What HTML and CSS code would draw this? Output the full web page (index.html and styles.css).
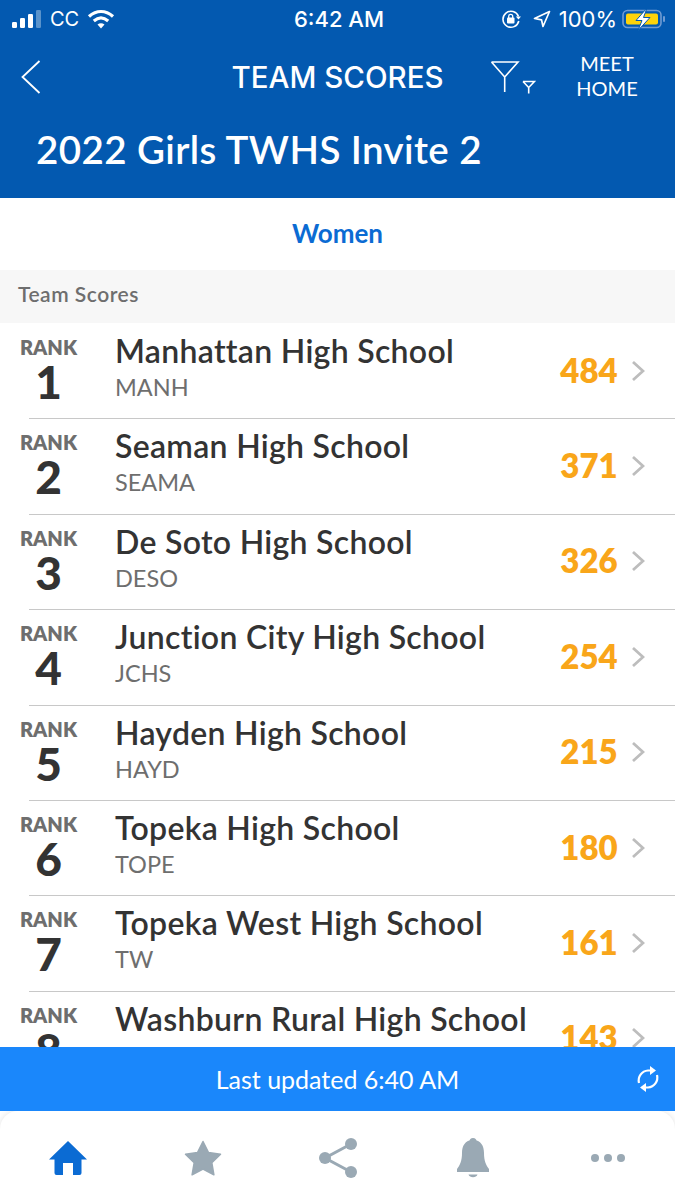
FILE: index.html
```html
<!DOCTYPE html>
<html>
<head>
    <title>Team Scores</title>
    <link rel="stylesheet" href="styles.css">
</head>
<body>
    <div class="screen">
        <div class="header">
            <div class="status-bar">
                <div class="status-left">
                    <svg class="signal" width="30" height="20" viewBox="0 0 30 20">
                        <rect x="0" y="13" width="5" height="6" rx="1.2" fill="#fff"/>
                        <rect x="8" y="9" width="5" height="10" rx="1.2" fill="#fff"/>
                        <rect x="16" y="5" width="5" height="14" rx="1.2" fill="#fff"/>
                        <rect x="24" y="1" width="5" height="18" rx="1.2" fill="#fff" opacity=".35"/>
                    </svg>
                    <span>CC</span>
                    <svg width="28" height="20" viewBox="0 0 28 20">
                        <path d="M2 7.5C9.500 .8 18.500 .8 26 7.500" fill="none" stroke="#fff" stroke-width="3.200"/>
                        <path d="M6.800 12C11.500 8 16.500 8 21.200 12" fill="none" stroke="#fff" stroke-width="3.200"/>
                        <path d="M10.500 15.500C12.800 13.700 15.200 13.700 17.500 15.500L14 19.500Z" fill="#fff"/>
                    </svg>
                </div>
                <div class="status-time">6:42 AM</div>
                <div class="status-right">
                    <svg class="rotation-lock" width="20" height="20" viewBox="0 0 20 20">
                        <path d="M17.500 7.500A8 8 0 1 0 17.800 12" fill="none" stroke="#fff" stroke-width="1.600"/>
                        <path d="M14.800 7.500H20L17.500 10.500Z" fill="#fff"/>
                        <rect x="6" y="8.500" width="7.500" height="6" rx="1" fill="#fff"/>
                        <path d="M7.700 9V7.300a2 2 0 0 1 4 0V9" fill="none" stroke="#fff" stroke-width="1.300"/>
                    </svg>
                    <svg width="18" height="18" viewBox="0 0 18 18">
                        <path d="M16.500 1.500L1.500 8.500L8.500 9.800L10 16.500Z" fill="none" stroke="#fff" stroke-width="1.700" stroke-linejoin="round"/>
                    </svg>
                    <span class="battery-pct">100%</span>
                    <svg class="battery" width="44" height="24" viewBox="0 0 44 24">
                        <rect x="1" y="3.500" width="38" height="17" rx="4.500" fill="none" stroke="#6f9bd3" stroke-width="1.600"/>
                        <rect x="4" y="6.500" width="32" height="11" rx="2" fill="#fed30a"/>
                        <rect x="41" y="9" width="2" height="6" rx="1" fill="#6f9bd3"/>
                        <path d="M25 1L14 13.500H20L16 23.500L28 10.500H21.500Z" fill="#fff" stroke="#0359b0" stroke-width="1"/>
                    </svg>
                </div>
            </div>
            <div class="nav-bar">
                <div class="nav-left">
                    <svg class="back" width="22" height="36" viewBox="0 0 22 36">
                        <path d="M19.500 2L2.500 18L19.500 34" fill="none" stroke="#fff" stroke-width="1.800"/>
                    </svg>
                </div>
                <div class="nav-title">TEAM SCORES</div>
                <div class="nav-right">
                    <svg class="filter" width="46" height="34" viewBox="0 0 46 34">
                        <path d="M1.500 2H28L14.700 17V32M14.700 17L1.500 2" fill="none" stroke="#fff" stroke-width="1.600"/>
                        <path d="M33 21.500H44.500L38.700 27.500V33.500M38.700 27.500L33 21.500" fill="none" stroke="#fff" stroke-width="1.600"/>
                    </svg>
                    <div class="meet-home">MEET<br>HOME</div>
                </div>
            </div>
            <div class="meet-name">2022 Girls TWHS Invite 2</div>
        </div>

        <div class="tab-title">Women</div>
        <div class="section-label">Team Scores</div>

        <div class="score-list">
            <div class="score-row">
                <div class="rank"><span class="rank-label">RANK</span><span class="rank-num">1</span></div>
                <div class="school"><div class="school-name">Manhattan High School</div><div class="school-code">MANH</div></div>
                <div class="points">484</div>
                <svg class="chevron" width="14" height="22" viewBox="0 0 14 22"><path d="M2 2L12 11L2 20" fill="none" stroke="#bdbdbd" stroke-width="2.800"/></svg>
            </div>
            <div class="score-row">
                <div class="rank"><span class="rank-label">RANK</span><span class="rank-num">2</span></div>
                <div class="school"><div class="school-name">Seaman High School</div><div class="school-code">SEAMA</div></div>
                <div class="points">371</div>
                <svg class="chevron" width="14" height="22" viewBox="0 0 14 22"><path d="M2 2L12 11L2 20" fill="none" stroke="#bdbdbd" stroke-width="2.800"/></svg>
            </div>
            <div class="score-row">
                <div class="rank"><span class="rank-label">RANK</span><span class="rank-num">3</span></div>
                <div class="school"><div class="school-name">De Soto High School</div><div class="school-code">DESO</div></div>
                <div class="points">326</div>
                <svg class="chevron" width="14" height="22" viewBox="0 0 14 22"><path d="M2 2L12 11L2 20" fill="none" stroke="#bdbdbd" stroke-width="2.800"/></svg>
            </div>
            <div class="score-row">
                <div class="rank"><span class="rank-label">RANK</span><span class="rank-num">4</span></div>
                <div class="school"><div class="school-name">Junction City High School</div><div class="school-code">JCHS</div></div>
                <div class="points">254</div>
                <svg class="chevron" width="14" height="22" viewBox="0 0 14 22"><path d="M2 2L12 11L2 20" fill="none" stroke="#bdbdbd" stroke-width="2.800"/></svg>
            </div>
            <div class="score-row">
                <div class="rank"><span class="rank-label">RANK</span><span class="rank-num">5</span></div>
                <div class="school"><div class="school-name">Hayden High School</div><div class="school-code">HAYD</div></div>
                <div class="points">215</div>
                <svg class="chevron" width="14" height="22" viewBox="0 0 14 22"><path d="M2 2L12 11L2 20" fill="none" stroke="#bdbdbd" stroke-width="2.800"/></svg>
            </div>
            <div class="score-row">
                <div class="rank"><span class="rank-label">RANK</span><span class="rank-num">6</span></div>
                <div class="school"><div class="school-name">Topeka High School</div><div class="school-code">TOPE</div></div>
                <div class="points">180</div>
                <svg class="chevron" width="14" height="22" viewBox="0 0 14 22"><path d="M2 2L12 11L2 20" fill="none" stroke="#bdbdbd" stroke-width="2.800"/></svg>
            </div>
            <div class="score-row">
                <div class="rank"><span class="rank-label">RANK</span><span class="rank-num">7</span></div>
                <div class="school"><div class="school-name">Topeka West High School</div><div class="school-code">TW</div></div>
                <div class="points">161</div>
                <svg class="chevron" width="14" height="22" viewBox="0 0 14 22"><path d="M2 2L12 11L2 20" fill="none" stroke="#bdbdbd" stroke-width="2.800"/></svg>
            </div>
            <div class="score-row">
                <div class="rank"><span class="rank-label">RANK</span><span class="rank-num">8</span></div>
                <div class="school"><div class="school-name">Washburn Rural High School</div><div class="school-code">WRHS</div></div>
                <div class="points">143</div>
                <svg class="chevron" width="14" height="22" viewBox="0 0 14 22"><path d="M2 2L12 11L2 20" fill="none" stroke="#bdbdbd" stroke-width="2.800"/></svg>
            </div>
        </div>

        <div class="update-bar">
            <span>Last updated 6:40 AM</span>
            <svg class="refresh" width="24" height="28" viewBox="0 0 24 28">
                <path d="M3 18A10 10 0 0 1 12 5.500H15" fill="none" stroke="#fff" stroke-width="2.200"/>
                <path d="M14 1L20 5.500L14 10Z" fill="#fff"/>
                <path d="M21 10A10 10 0 0 1 12 22.500H9" fill="none" stroke="#fff" stroke-width="2.200"/>
                <path d="M10 18L4 22.500L10 27Z" fill="#fff"/>
            </svg>
        </div>

        <div class="tab-bar">
            <svg width="40" height="36" viewBox="0 0 40 36">
                <path d="M20 1L39 19.500H33.500V33a2 2 0 0 1-2 2H25V23H15V35H8.500a2 2 0 0 1-2-2V19.500H1Z" fill="#0b6bd3"/>
            </svg>
            <svg width="38" height="36" viewBox="0 0 38 36">
                <path d="M19 1.500L24.500 12.500L36.500 14.200L27.800 22.700L29.900 34.800L19 29L8.100 34.800L10.200 22.700L1.500 14.200L13.500 12.500Z" fill="#9aa9b4" stroke="#9aa9b4" stroke-width="1.500" stroke-linejoin="round"/>
            </svg>
            <svg width="40" height="42" viewBox="0 0 40 42">
                <path d="M33 7L7 21L33 35" fill="none" stroke="#9aa9b4" stroke-width="3"/>
                <circle cx="33" cy="7" r="6" fill="#9aa9b4"/>
                <circle cx="7" cy="21" r="6" fill="#9aa9b4"/>
                <circle cx="33" cy="35" r="6" fill="#9aa9b4"/>
            </svg>
            <svg width="34" height="42" viewBox="0 0 34 42">
                <circle cx="17" cy="4.500" r="3.500" fill="#9aa9b4"/>
                <path d="M17 3C9 3 6 9 6 16C6 24 4 28 1 32V35H33V32C30 28 28 24 28 16C28 9 25 3 17 3Z" fill="#9aa9b4"/>
                <path d="M12.500 37.500H21.500C20.500 41 13.500 41 12.500 37.500Z" fill="#9aa9b4"/>
            </svg>
            <svg width="36" height="10" viewBox="0 0 36 10">
                <circle cx="5" cy="5" r="4" fill="#9aa9b4"/>
                <circle cx="18" cy="5" r="4" fill="#9aa9b4"/>
                <circle cx="31" cy="5" r="4" fill="#9aa9b4"/>
            </svg>
        </div>
    </div>
</body>
</html>
```

FILE: styles.css
```css
html, body {
    margin: 0;
    padding: 0;
}
body {
    font-family: "Lato", "Open Sans", sans-serif;
    background-color: #fff;
}
.screen {
    width: 675px;
    height: 1200px;
    display: flex;
    flex-direction: column;
    overflow: hidden;
}
.header {
    height: 198px;
    flex-shrink: 0;
    background-color: #0359b0;
    color: #fff;
}
.status-bar {
    height: 37px;
    display: grid;
    grid-template-columns: 1fr auto 1fr;
    align-items: center;
    padding: 0 9px 0 12px;
    font-family: "Inter", sans-serif;
    font-size: 20px;
}
.status-left, .status-right {
    display: flex;
    align-items: center;
    gap: 8px;
}
.status-right {
    justify-content: flex-end;
}
.rotation-lock {
    margin-right: 4px;
}
.battery-pct {
    font-size: 22px;
    margin-right: -3px;
}
.status-time {
    font-weight: 500;
    font-size: 22px;
}
.nav-bar {
    height: 80px;
    display: grid;
    grid-template-columns: 1fr auto 1fr;
    align-items: center;
    padding-left: 20px;
}
.nav-left {
    display: flex;
}
.nav-right {
    display: flex;
    align-items: center;
    justify-content: flex-end;
}
.nav-title {
    font-family: "Inter", sans-serif;
    font-size: 29.5px;
    font-weight: 500;
    margin-left: -20px;
}
.filter {
    margin-right: 40px;
}
.meet-home {
    width: 62px;
    margin-right: 37px;
    text-align: center;
    font-size: 20px;
    line-height: 25px;
    margin-top: -2px;
}
.meet-name {
    padding-left: 36px;
    font-size: 38.5px;
    font-weight: 600;
    letter-spacing: .4px;
    line-height: 48px;
    margin-top: 8px;
}
.tab-title {
    height: 72px;
    flex-shrink: 0;
    line-height: 71px;
    text-align: center;
    color: #0b6bd3;
    font-size: 26px;
    font-weight: 700;
}
.section-label {
    height: 53px;
    flex-shrink: 0;
    line-height: 48px;
    padding-left: 18px;
    background-color: #f7f7f7;
    color: #6e6e6e;
    font-size: 21px;
    font-weight: 600;
    letter-spacing: .5px;
}
.score-list {
    flex: 1;
    overflow: hidden;
}
.score-row {
    height: 95.4px;
    box-sizing: border-box;
    display: flex;
    align-items: center;
    padding-right: 30px;
    position: relative;
}
.score-row::after {
    content: "";
    position: absolute;
    left: 29px;
    right: 0;
    bottom: -1px;
    height: 1px;
    background-color: #c8c8c8;
}
.rank {
    width: 115px;
    flex-shrink: 0;
    padding-right: 18px;
    box-sizing: border-box;
    display: flex;
    flex-direction: column;
    align-items: center;
    align-self: flex-start;
    padding-top: 12px;
}
.rank-label {
    color: #6e6e6e;
    font-size: 20px;
    font-weight: 800;
    line-height: 24px;
}
.rank-num {
    color: #333;
    font-size: 46px;
    font-weight: 900;
    line-height: 46px;
}
.school {
    flex: 1;
    align-self: flex-start;
    padding-top: 8px;
}
.school-name {
    color: #333;
    font-size: 32px;
    font-weight: 600;
    letter-spacing: .3px;
    line-height: 40px;
}
.school-code {
    color: #6e6e6e;
    font-size: 23.5px;
    line-height: 32px;
}
.points {
    width: 64px;
    text-align: center;
    color: #f9a61a;
    font-size: 33px;
    font-weight: 800;
    margin-right: 10px;
    margin-top: -2px;
}
.update-bar {
    height: 64px;
    flex-shrink: 0;
    position: relative;
    display: flex;
    align-items: center;
    justify-content: center;
    background-color: #1a87fb;
    color: #fff;
    font-size: 25px;
}
.refresh {
    position: absolute;
    right: 15px;
    top: 18px;
}
.tab-bar {
    height: 89px;
    flex-shrink: 0;
    display: grid;
    grid-template-columns: repeat(5, 1fr);
    justify-items: center;
    align-items: center;
    padding-top: 5px;
    box-sizing: border-box;
    border-radius: 18px 18px 0 0;
    box-shadow: 0 0 6px rgba(0, 0, 0, .12);
}
```
